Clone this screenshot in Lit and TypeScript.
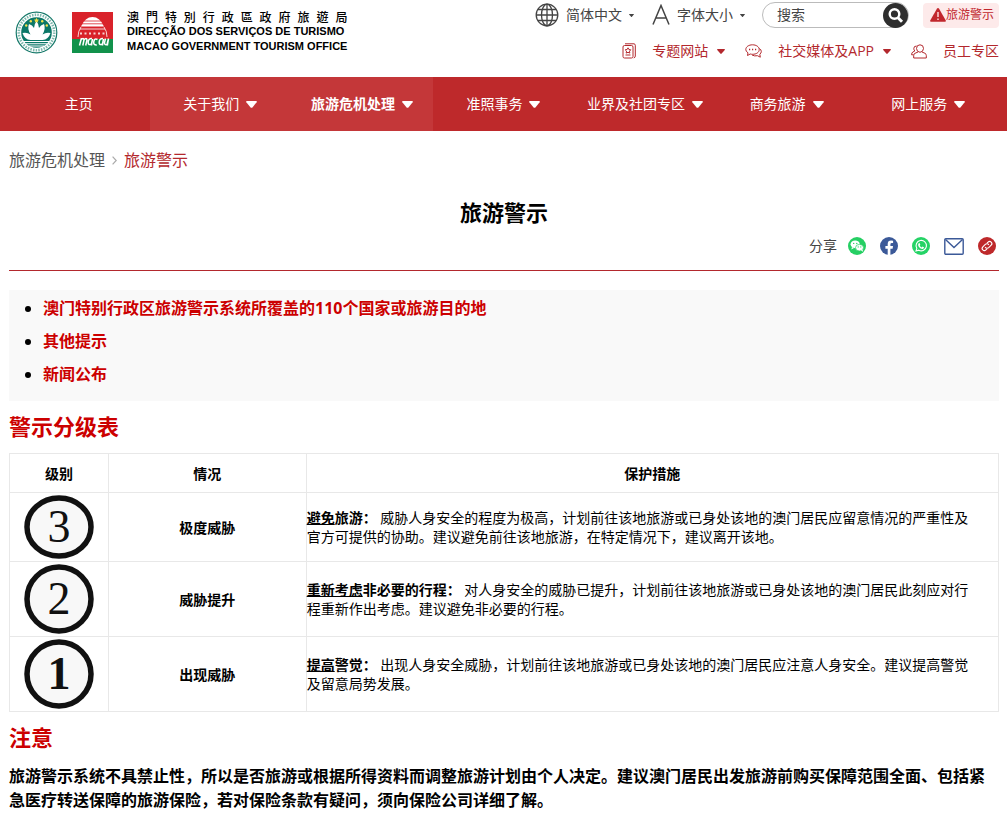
import { LitElement, html, css, svg } from "lit";
import { customElement } from "lit/decorators.js";
import { classMap } from "lit/directives/class-map.js";

interface NavItem { label: string; menu: boolean; tint?: boolean; current?: boolean }

const NAV: NavItem[] = [
  { label: "主页", menu: false },
  { label: "关于我们", menu: true, tint: true },
  { label: "旅游危机处理", menu: true, tint: true, current: true },
  { label: "准照事务", menu: true },
  { label: "业界及社团专区", menu: true },
  { label: "商务旅游", menu: true },
  { label: "网上服务", menu: true },
];

const LEVELS = [
  { n: "3", ry: 29, weight: 400, name: "极度威胁", lead: "避免", rest: "旅游：",
    text: "威胁人身安全的程度为极高，计划前往该地旅游或已身处该地的澳门居民应留意情况的严重性及官方可提供的协助。建议避免前往该地旅游，在特定情况下，建议离开该地。" },
  { n: "2", ry: 32, weight: 400, name: "威胁提升", lead: "重新考虑", rest: "非必要的行程：",
    text: "对人身安全的威胁已提升，计划前往该地旅游或已身处该地的澳门居民此刻应对行程重新作出考虑。建议避免非必要的行程。" },
  { n: "1", ry: 32, weight: 700, name: "出现威胁", lead: "提高", rest: "警觉：",
    text: "出现人身安全威胁，计划前往该地旅游或已身处该地的澳门居民应注意人身安全。建议提高警觉及留意局势发展。" },
];

const caret = (w: number, h: number) => svg`<svg class="caret" width=${w} height=${h} viewBox="0 0 12 8" preserveAspectRatio="none" aria-hidden="true"><path d="M1 0h10q1.400.3.6 1.400L7 7.300q-1 1-2 0L.4 1.400Q-.4.3 1 0z" fill="currentColor"/></svg>`;

@customElement("site-brand")
export class SiteBrand extends LitElement {
  static styles = css`
    .brand { display: flex; align-items: center; gap: 14px; color: #000; text-decoration: none; }
    svg { display: block; }
    .names { display: flex; flex-direction: column; font: 700 11px/15px "Liberation Sans", Arial, sans-serif; white-space: nowrap; }
    .zh { font: 500 12px/14px "Noto Sans CJK TC", sans-serif; text-align-last: justify; }
  `;
  render() {
    return html`<a class="brand" href="#">
      <svg width="43" height="43" viewBox="0 0 43 43" aria-hidden="true">
        <circle cx="21.500" cy="21.500" r="20.300" fill="#fff" stroke="#16796a" stroke-width="1.200"/>
        <circle cx="21.500" cy="21.500" r="17.700" fill="none" stroke="#7fb8ad" stroke-width="2.600" stroke-dasharray="1.500 1.200"/>
        <circle cx="21.500" cy="21.500" r="15.300" fill="#0b7767"/>
        <path d="M7.500 22q4.500-1 8 1.500-3.500-6-1.500-10.500 3.500 1 5 4 0-4 2.500-6.500 2.500 2.500 2.500 6.500 1.500-3 5-4 2 4.500-1.500 10.500 3.500-2.500 8-1.500-2 6.500-8 7h-12Q9.500 28.500 7.500 22z" fill="#fff"/>
        <path d="M8.500 30.500h26M10.500 32.800h22M14 35h15" stroke="#fff" stroke-width="1.100"/>
        <path d="M21.500 6.800l.8 1.800 1.900.1-1.500 1.200.6 1.900-1.800-1.100-1.800 1.100.6-1.900-1.500-1.200 1.900-.1z" fill="#f5e14a"/>
        <g fill="#f5e14a"><circle cx="15.800" cy="10.300" r="1.200"/><circle cx="27.200" cy="10.300" r="1.200"/><circle cx="11.200" cy="14.500" r="1.200"/><circle cx="31.800" cy="14.500" r="1.200"/></g>
      </svg>
      <svg width="41" height="41" viewBox="0 0 41 41" aria-hidden="true">
        <path fill="#d9222a" d="M0 0h41v27H0z"/><path fill="#11924b" d="M0 27h41v14H0z"/>
        <path d="M9 14.500Q13 5 20.500 5T32 14.500z" fill="#fff"/>
        <path d="M12 9h17M10 11.800h21" stroke="#d9222a" stroke-width=".8"/>
        <g fill="none" stroke="#fff"><path d="M8 17h25" stroke-width=".8"/><path d="M8 21.500h26" stroke-width="2" stroke-dasharray="2 2.500" opacity=".8"/><path d="M9 15Q6 19 6 25M32 15q3 4 3 10" stroke-width=".8"/></g>
        <path d="M7.500 33.500l2-7.500m-.5 2q2.500-3 3 0l-1.200 5.500m1.200-5.500q2.500-3 3 0l-1.300 5.500M20 26.500q-3.500-.3-3.800 3.500t3.300 2l1-5-1 6.500M25.500 27.500q-3-1.800-3.700 2t3 3.500M31 26.500q-3.500-.3-3.800 3.500t3.300 2l1-5-1 6.500M33.500 26.500l-1 4q0 3 2.500 2l1.500-6-1.200 7" fill="none" stroke="#fff" stroke-width="1.500"/>
      </svg>
      <span class="names"><span class="zh">澳門特別行政區政府旅遊局</span><span>DIRECÇÃO DOS SERVIÇOS DE TURISMO</span><span>MACAO GOVERNMENT TOURISM OFFICE</span></span>
    </a>`;
  }
}

@customElement("site-tools")
export class SiteTools extends LitElement {
  static styles = css`
    :host { display: flex; flex-direction: column; align-items: flex-end; gap: 12px; font: 14px/20px "Open Sans", "Noto Sans CJK SC", sans-serif; }
    .row, .item, .search, .alert { display: flex; align-items: center; }
    svg { display: block; flex: none; }
    a, button { color: inherit; text-decoration: none; font: inherit; white-space: nowrap; }
    button { border: 0; background: none; padding: 0; }
    .top { color: #444; height: 28px; }
    .item { gap: 7px; }
    .next { margin-left: 18px; }
    .search { margin-left: 17px; width: 147px; height: 26px; box-sizing: border-box; border: 1px solid #bbb; border-radius: 13px; }
    .search input { flex: 1; min-width: 0; border: 0; outline: 0; background: none; padding: 0 0 0 14px; font: inherit; color: #444; }
    .search input::placeholder { color: #444; opacity: 1; }
    .alert { margin-left: 14px; padding: 0 5px 0 7px; height: 25px; border-radius: 4px; background: #fdeaea; color: #c1272d; font-size: 12px; }
    .links { color: #b3282d; gap: 20px; }
    .links .item { gap: 16px; }
    .links .label { display: flex; align-items: center; gap: 9px; }
  `;
  render() {
    return html`
      <div class="row top">
        <button class="item" type="button">
          <svg width="24" height="24" viewBox="0 0 24 24" fill="none" stroke="#444" stroke-width="1.300" aria-hidden="true"><circle cx="12" cy="12" r="10.800"/><ellipse cx="12" cy="12" rx="5.500" ry="10.800"/><path d="M12 1v22M1 12h22M3 6.500h18M3 17.500h18"/></svg>
          简体中文 ${caret(5, 3)}
        </button>
        <button class="item next" type="button">
          <svg width="18" height="22" viewBox="0 0 18 22" fill="none" stroke="#444" stroke-width="1.500" aria-hidden="true"><path d="M1 20.500L9 1.500l8 19M4 14h10"/></svg>
          字体大小 ${caret(5, 3)}
        </button>
        <form class="search" role="search">
          <input type="search" placeholder="搜索" aria-label="搜索">
          <button type="button" aria-label="搜索"><svg width="25" height="25" viewBox="0 0 25 25"><circle cx="12.500" cy="12.500" r="12.500" fill="#2e2e2e"/><circle cx="11.500" cy="11" r="4.800" fill="none" stroke="#fff" stroke-width="2.400"/><path d="M15 14.800l4 4" stroke="#fff" stroke-width="3"/></svg></button>
        </form>
        <a class="alert" href="#"><svg width="16" height="14" viewBox="0 0 16 14" aria-hidden="true"><path d="M8 0q.7 0 1.100.7L15.800 12.500q.4 1-.8 1.300H1q-1.200-.3-.8-1.300L6.900.7Q7.300 0 8 0z" fill="#c1272d"/><path d="M8 4v5M8 10.500v1.500" stroke="#fbd5d5" stroke-width="1.500"/></svg>旅游警示</a>
      </div>
      <div class="row links">
        <a class="item" href="#">
          <svg width="14" height="16" viewBox="0 0 14 16" fill="none" stroke="currentColor" aria-hidden="true"><rect x="1" y="2.500" width="10" height="12.500" rx="1.500"/><path d="M3 .8h9q1.300.2 1.300 1.500V13q0 1.500-1.500 2M3.500 12h5"/><path d="M6 4.800l.9 1.700 1.900.3-1.300 1.300.3 2L6 9.300l-1.800.8.300-2-1.300-1.300 1.900-.3z"/></svg>
          <span class="label">专题网站 ${caret(8, 5)}</span></a>
        <a class="item" href="#">
          <svg width="17" height="15" viewBox="0 0 17 15" fill="none" stroke="currentColor" aria-hidden="true"><path d="M7.500.8c3.800 0 6.700 2 6.700 4.800s-2.900 4.700-6.700 4.700q-1.200 0-2.300-.3L2.500 11.500 3 8.800Q.8 7.500.8 5.600C.8 2.800 3.700.8 7.500.8zM14.300 4.500q2 1 2 3 0 1.700-1.500 2.700l.5 3-2.800-1.500q-3 .7-5.500-.7"/><path d="M4 5.500h1.200M7 5.500h1.200M10 5.500h1.200" stroke-width="1.500"/></svg>
          <span class="label">社交媒体及APP ${caret(8, 5)}</span></a>
        <a class="item" href="#">
          <svg width="16" height="15" viewBox="0 0 16 15" fill="none" stroke="currentColor" aria-hidden="true"><path d="M5.500 4.500Q5.500.8 9 .8t3.500 3.700Q12.300 8 9 8.300 5.700 8 5.500 4.500zM7 8l-3 1.300q-1.300.7-1.300 2.200V14h12.600v-2.500q0-1.500-1.300-2.200L11 8M5.500 2Q2.800 2 2.800 4.500q0 1.500 1 2.500L1.800 8Q.6 8.700.6 10.800h2"/></svg>
          <span class="label">员工专区</span></a>
      </div>`;
  }
}

@customElement("site-nav")
export class SiteNav extends LitElement {
  static styles = css`
    nav { display: grid; grid-template-columns: repeat(7, 1fr); padding: 0 8px; background: #be292b; font: 14px/20px "Open Sans", "Noto Sans CJK SC", sans-serif; }
    a { display: flex; align-items: center; justify-content: center; gap: 7px; height: 54px; color: #fff; text-decoration: none; white-space: nowrap; }
    .tint { background: #c43739; }
    .current { font-weight: 700; }
  `;
  render() {
    return html`<nav>${NAV.map((i) => html`<a href="#" class=${classMap({ tint: !!i.tint, current: !!i.current })}>${i.label}${i.menu ? caret(11, 7) : ""}</a>`)}</nav>`;
  }
}

@customElement("share-bar")
export class ShareBar extends LitElement {
  static styles = css`
    :host { display: flex; justify-content: flex-end; align-items: center; height: 24px; padding: 0 3px 0 0; font: 14px/20px "Open Sans", "Noto Sans CJK SC", sans-serif; color: #444; }
    .icons { display: flex; align-items: center; gap: 14px; margin-left: 11px; }
    a, svg { display: block; }
  `;
  render() {
    return html`<span>分享</span><span class="icons">
      <a href="#" aria-label="微信"><svg width="18" height="18" viewBox="0 0 18 18"><circle cx="9" cy="9" r="9" fill="#25cf63"/><ellipse cx="7.200" cy="7.300" rx="4.600" ry="3.900" fill="#fff"/><path d="M4 10l-.6 2.500 2.600-1.500z" fill="#fff"/><ellipse cx="11.500" cy="10.700" rx="4" ry="3.300" fill="#fff" stroke="#25cf63" stroke-width=".7"/><path d="M13 13.500l2 1.200-.4-2.200z" fill="#fff"/><g fill="#25cf63"><circle cx="5.700" cy="6.400" r=".7"/><circle cx="8.800" cy="6.400" r=".7"/><circle cx="10.200" cy="9.900" r=".6"/><circle cx="12.800" cy="9.900" r=".6"/></g></svg></a>
      <a href="#" aria-label="Facebook"><svg width="18" height="18" viewBox="0 0 18 18"><circle cx="9" cy="9" r="9" fill="#3b5998"/><path d="M7.700 18v-6.300H5.400V9h2.300V7q0-3.400 3.400-3.400l2 .2v2.300h-1.300q-1.400 0-1.400 1.400V9h2.600l-.4 2.700h-2.200V18z" fill="#fff"/></svg></a>
      <a href="#" aria-label="WhatsApp"><svg width="18" height="18" viewBox="0 0 18 18"><circle cx="9" cy="9" r="9" fill="#25d366"/><path d="M4 14l.8-2.700A5.200 5.200 0 1 1 6.800 13.200z" fill="none" stroke="#fff" stroke-width="1.100"/><path d="M6.700 6.300q.6-.6 1 0l.6 1.400-.6.8q.7 1.400 2 1.900l.8-.8 1.500.7q.2 1.300-1.400 1.600-2 .1-3.700-2-1.600-2.100-.2-3.600z" fill="#fff"/></svg></a>
      <a href="#" aria-label="Email"><svg width="20" height="17" viewBox="0 0 20 17" fill="none" stroke="#3b5998" stroke-width="1.400"><rect x=".8" y=".8" width="18.400" height="15.400" rx="1"/><path d="M1.500 1.500L10 9.500l8.500-8"/></svg></a>
      <a href="#" aria-label="链接"><svg width="18" height="18" viewBox="0 0 18 18"><circle cx="9" cy="9" r="9" fill="#be292b"/><g transform="rotate(-45 9 9)" fill="none" stroke="#fff" stroke-width="1.100"><path d="M7 11H5.500a2.200 2.200 0 0 1 0-4.400H9a2.200 2.200 0 0 1 2 3"/><path d="M11 7h1.500a2.200 2.200 0 0 1 0 4.400H9a2.200 2.200 0 0 1-2-3"/></g></svg></a>
    </span>`;
  }
}

@customElement("level-table")
export class LevelTable extends LitElement {
  static styles = css`
    :host { display: block; }
    table { width: 100%; border-collapse: collapse; table-layout: fixed; font: 14px/19px "Open Sans", "Noto Sans CJK SC", sans-serif; color: #000; }
    th, td { border: 1px solid #e8e8e8; padding: 0; }
    th { font-weight: 700; text-align: center; }
    thead th { height: 39px; padding-top: 1px; box-sizing: border-box; }
    .c1 { width: 10%; } .c2 { width: 20%; }
    .pic { padding: 2px 0; }
    td.text { padding-right: 20px; }
    b { font-weight: 700; }
    .lead { text-decoration: underline; }
    svg { display: block; margin: 0 auto; }
    text { font-family: "Liberation Serif", serif; font-size: 46px; text-anchor: middle; fill: #111; }
  `;
  render() {
    return html`<table>
      <colgroup><col class="c1"><col class="c2"><col></colgroup>
      <thead><tr><th scope="col">级别</th><th scope="col">情况</th><th scope="col">保护措施</th></tr></thead>
      <tbody>${LEVELS.map((l) => {
        const h = l.ry * 2 + 6;
        return html`<tr>
          <td class="pic"><svg width="70" height=${h} viewBox="0 0 70 ${h}" role="img" aria-label=${l.n}>
            <ellipse cx="35" cy=${h / 2} rx="32" ry=${l.ry} fill="#f8f8f8" stroke="#111" stroke-width="5.500"/>
            <text x="35" y=${h / 2 + 15} font-weight=${l.weight}>${l.n}</text></svg></td>
          <th scope="row">${l.name}</th>
          <td class="text"><b class="lead">${l.lead}</b><b>${l.rest}</b> ${l.text}</td></tr>`;
      })}</tbody></table>`;
  }
}

@customElement("app-root")
export class AppRoot extends LitElement {
  static styles = css`
    :host { display: block; background: #fff; color: #000; font: 16px/24px "Open Sans", "Noto Sans CJK SC", sans-serif; }
    header { display: flex; justify-content: space-between; align-items: flex-start; height: 77px; padding: 0 8px 0 15px; box-sizing: border-box; }
    site-brand { margin-top: 10px; }
    site-tools { margin-top: 1px; }
    main { padding: 0 8px 5px 9px; }
    .crumbs { display: flex; align-items: center; gap: 7px; padding: 17px 0; color: #555; }
    a { text-decoration: none; color: inherit; }
    .here { color: #b3282d; }
    h1 { margin: 7px 0 6px; font-size: 22px; line-height: 32px; text-align: center; }
    share-bar { padding-bottom: 12px; border-bottom: 1px solid #b3282d; }
    .toc { margin: 19px 0 0; padding: 2px 0 10px 34px; background: #f9f9f9; }
    .toc li { padding: 4px 0; line-height: 25px; }
    .toc a { color: #c00; font-weight: 700; }
    h2 { margin: 9px 0 11px; font-size: 22px; line-height: 32px; color: #c00; }
    p { margin: 0; font-weight: 700; }
  `;
  render() {
    return html`
      <header><site-brand></site-brand><site-tools></site-tools></header>
      <site-nav></site-nav>
      <main>
        <div class="crumbs"><a href="#">旅游危机处理</a>
          <svg width="5" height="9" viewBox="0 0 5 9" fill="none" stroke="#aaa" stroke-width="1.200" aria-hidden="true"><path d="M.6.6l3.600 3.900L.6 8.400"/></svg>
          <a class="here" href="#">旅游警示</a></div>
        <h1>旅游警示</h1>
        <share-bar></share-bar>
        <ul class="toc">
          <li><a href="#">澳门特别行政区旅游警示系统所覆盖的110个国家或旅游目的地</a></li>
          <li><a href="#">其他提示</a></li>
          <li><a href="#">新闻公布</a></li>
        </ul>
        <h2>警示分级表</h2>
        <level-table></level-table>
        <h2>注意</h2>
        <p>旅游警示系统不具禁止性，所以是否旅游或根据所得资料而调整旅游计划由个人决定。建议澳门居民出发旅游前购买保障范围全面、包括紧急医疗转送保障的旅游保险，若对保险条款有疑问，须向保险公司详细了解。</p>
      </main>`;
  }
}
